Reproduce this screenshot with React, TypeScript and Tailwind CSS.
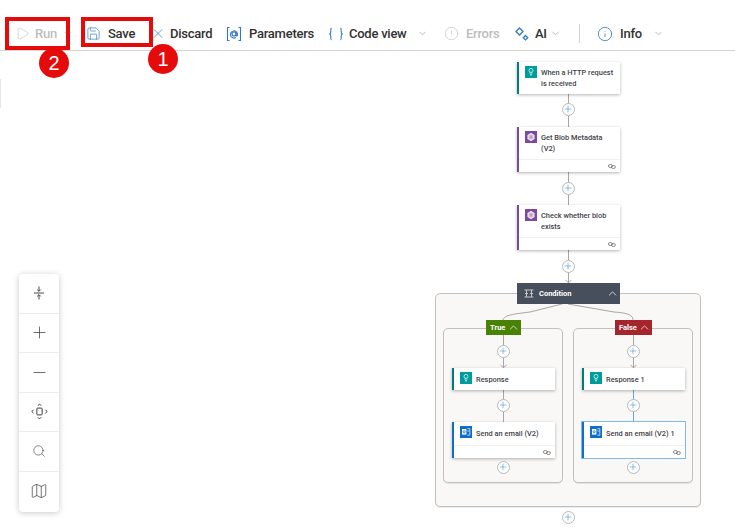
import React from "react";
import { ChevronDown, ChevronUp, X, Info, Play, Save, CircleAlert, Plus, Minus, Search, Map as MapIcon } from "lucide-react";

const font = { fontFamily: 'Roboto,"Noto Sans",sans-serif' };

function Chev({ className = "" }: { className?: string }) {
  return <ChevronDown size={11} strokeWidth={1.2} className={"text-[#8a8886] " + className} />;
}

function ToolButton({ icon, label, muted, after, className = "", gap }: { icon: React.ReactNode; label: string; muted?: boolean; after?: React.ReactNode; className?: string; gap: string }) {
  return (
    <div className={"flex items-center shrink-0 " + className}>
      <span className="flex w-4 h-4 items-center justify-center">{icon}</span>
      <span className={gap + " text-[13px] font-medium tracking-[-0.25px] " + (muted ? "text-[#bdbdbd]" : "text-[#323130]")}>{label}</span>
      {after}
    </div>
  );
}

function HttpIcon({ color = "#009c9c" }: { color?: string }) {
  return (
    <svg width="12" height="12" viewBox="0 0 12 12" className="shrink-0">
      <rect width="12" height="12" fill={color} />
      <circle cx="6" cy="4.4" r="2" fill="none" stroke="#bfe9e9" strokeWidth="0.9" />
      <path d="M4.4 7h3.2M5 8.4h2M5.6 9.6h.8" stroke="#bfe9e9" strokeWidth="0.9" />
    </svg>
  );
}
function BlobIcon() {
  return (
    <svg width="12" height="12" viewBox="0 0 12 12" className="shrink-0">
      <rect width="12" height="12" fill="#7c4a9c" />
      <path d="M6 1.8 9.6 3.9v4.2L6 10.2 2.4 8.1V3.9Z" fill="#e6dcec" />
      <rect x="4.4" y="4.3" width="3.2" height="3.4" fill="#b9a0c9" />
    </svg>
  );
}
function OutlookIcon() {
  return (
    <svg width="12" height="12" viewBox="0 0 12 12" className="shrink-0">
      <rect width="12" height="12" fill="#0f6fc6" />
      <rect x="2" y="3" width="4.4" height="5.6" fill="#fff" />
      <circle cx="4.2" cy="5.8" r="1.1" fill="none" stroke="#0f6fc6" strokeWidth="0.8" />
      <path d="M7.4 2.6h2.4v6.6H7.4M7.4 5h2.4" fill="none" stroke="#cfe4f6" strokeWidth="0.8" />
    </svg>
  );
}

function LinkMark() {
  return (
    <svg width="8" height="5" viewBox="0 0 8 5">
      <ellipse cx="2.4" cy="2" rx="2" ry="1.5" fill="none" stroke="#6f6f6f" strokeWidth="0.8" />
      <ellipse cx="5.4" cy="3" rx="2" ry="1.5" fill="none" stroke="#6f6f6f" strokeWidth="0.8" />
    </svg>
  );
}

function Node({ x, y, w = 103, title, icon, accent, h, footer, selected, single }: { x: number; y: number; w?: number; h: number; title: React.ReactNode; icon: React.ReactNode; accent: string; footer?: boolean; selected?: boolean; single?: boolean }) {
  return (
    <div
      className={"absolute bg-white flex flex-col " + (selected ? "shadow-[0_0_0_1px_#7dbbec]" : "shadow-[0_1px_3px_rgba(0,0,0,0.3)]")}
      style={{ left: x, top: y, width: w, height: h, borderLeft: `2px solid ${accent}` }}
    >
      <div className="flex items-start gap-[4px] pl-[6px] pt-[4px] flex-1 min-h-0">
        {icon}
        <div className={"text-[7.4px] leading-[11px] font-medium text-[#3f3f48] whitespace-nowrap " + (single ? "mt-[2px]" : "mt-[1px]")}>{title}</div>
      </div>
      {footer && (
        <div className="h-[13px] border-t border-[#f0f0f0] flex items-center justify-end pr-[4px]">
          <LinkMark />
        </div>
      )}
    </div>
  );
}

function PlusDot({ x, y }: { x: number; y: number }) {
  return (
    <div
      className="absolute w-[13px] h-[13px] rounded-full bg-white border border-[#b8b8b8] flex items-center justify-center"
      style={{ left: x - 6.5, top: y - 6.5 }}
    >
      <Plus size={10} strokeWidth={1.4} className="text-[#3f92d8]" />
    </div>
  );
}

function VLine({ x, y1, y2, color = "#a6a6a6", arrow }: { x: number; y1: number; y2: number; color?: string; arrow?: boolean }) {
  return (
    <>
      <div className="absolute w-px" style={{ left: x, top: y1, height: y2 - y1, backgroundColor: color }} />
      {arrow && (
        <svg className="absolute" style={{ left: x - 3, top: y2 - 4 }} width="7" height="5" viewBox="0 0 7 5">
          <path d="M.5.8 3.5 3.8 6.5.8" fill="none" stroke={color} strokeWidth="1" />
        </svg>
      )}
    </>
  );
}

function BranchTag({ x, w, label, color }: { x: number; w: number; label: string; color: string }) {
  return (
    <div
      className="absolute h-[15px] top-[320px] flex items-center justify-between pl-[4px] pr-[1px] text-white text-[7.5px] font-bold"
      style={{ left: x, width: w, backgroundColor: color }}
    >
      <span>{label}</span>
      <ChevronUp size={13} strokeWidth={1.3} />
    </div>
  );
}

function Panel({ x }: { x: number }) {
  return (
    <div
      className="absolute top-[328px] w-[120px] h-[155px] rounded-[5px] border border-[#c2c0be] bg-[#f9f8f7] shadow-[0_1px_0_rgba(0,0,0,0.08)]"
      style={{ left: x }}
    />
  );
}

function ZoomControls() {
  const cell = "h-[39.5px] flex items-center justify-center text-[#333] border-b border-[#ececec] last:border-b-0";
  return (
    <div className="absolute left-[19px] top-[274px] w-[40px] h-[238px] bg-white rounded-[4px] shadow-[0_1px_6px_rgba(0,0,0,0.22)] flex flex-col">
      <div className={cell}>
        <svg width="12" height="14" viewBox="0 0 12 14" fill="none" stroke="#333" strokeWidth="0.9">
          <path d="M1 7h10M6 .5v4.6M4.200 3.600 6 5.400l1.800-1.800M6 13.500V8.900M4.200 10.400 6 8.600l1.800 1.800" />
        </svg>
      </div>
      <div className={cell}><Plus size={19} strokeWidth={0.9} /></div>
      <div className={cell}><Minus size={19} strokeWidth={0.9} /></div>
      <div className={cell}>
        <svg width="17" height="17" viewBox="0 0 16 16" fill="none" stroke="#333" strokeWidth="0.9">
          <rect x="5.500" y="4.800" width="5" height="6.400" rx="0.800" />
          <path d="M6.400 2.600 8 1l1.600 1.600M6.400 13.400 8 15l1.600-1.600M2.400 6.400.8 8l1.600 1.600M13.600 6.400 15.200 8l-1.600 1.600" />
        </svg>
      </div>
      <div className={cell}><Search size={14} strokeWidth={1} /></div>
      <div className={cell}><MapIcon size={18} strokeWidth={0.9} /></div>
    </div>
  );
}

function Badge({ x, y, n }: { x: number; y: number; n: string }) {
  return (
    <div
      className="absolute w-[30px] h-[30px] rounded-full bg-[#e60b0b] text-white text-[20px] flex items-center justify-center"
      style={{ left: x - 15, top: y - 15, fontFamily: '"Liberation Sans",sans-serif' }}
    >
      {n}
    </div>
  );
}

export default function App() {
  return (
    <div className="relative w-[735px] h-[528px] bg-white overflow-hidden" style={font}>
      <div className="h-[51px] border-b border-[#d4d4d4] flex items-center pl-[14px] pt-[18px] pb-[1px]">
        <ToolButton gap="ml-[5px]" icon={<Play size={15} strokeWidth={1} className="text-[#bdbdbd]" />} label="Run" muted after={<Chev className="ml-[5px]" />} className="w-[71px]" />
        <ToolButton gap="ml-[7px]" icon={<Save size={15} strokeWidth={1.2} className="text-[#3f86c9]" />} label="Save" className="w-[65px]" />
        <ToolButton gap="ml-[4px]" icon={<X size={17} strokeWidth={1.1} className="text-[#2f79be]" />} label="Discard" className="w-[76px]" />
        <ToolButton
          gap="ml-[7px]"
          icon={
            <svg width="16" height="16" viewBox="0 0 16 16" fill="none" stroke="#2f79be" strokeWidth="1.1">
              <path d="M3.500 1.500H1.500v13h2M12.500 1.500h2v13h-2" />
              <circle cx="8" cy="8" r="2" />
              <path d="M10 6v3.200c0 1 1.600 1 1.600-.6A3.600 3.600 0 1 0 9.800 11.600" />
            </svg>
          }
          label="Parameters"
          className="w-[102px]"
        />
        <ToolButton
          gap="ml-[5px]"
          icon={
            <svg width="16" height="16" viewBox="0 0 16 16" fill="none" stroke="#2f79be" strokeWidth="1.1">
              <path d="M3.500 2C2.500 2.500 2.800 4 2.800 5.500S2.700 7.600 1.800 8c.9.400 1 1 1 2.500S2.500 13.500 3.500 14M12.500 2c1 .5.700 2 .7 3.500S13.300 7.600 14.200 8c-.9.400-1 1-1 2.500s.3 3-.7 3.500" />
            </svg>
          }
          label="Code view"
          after={<Chev className="ml-[10px]" />}
          className="w-[115px]"
        />
        <ToolButton gap="ml-[7px]" icon={<CircleAlert size={15} strokeWidth={1} className="text-[#bdbdbd]" />} label="Errors" muted className="w-[71px]" />
        <ToolButton
          gap="ml-[5px]"
          icon={
            <svg width="16" height="16" viewBox="0 0 16 16" fill="none" stroke="#2f79be" strokeWidth="1.300">
              <path d="M5.500 2 9 5.500 5.500 9 2 5.500ZM11.500 9.500l2.200 2.200-2.200 2.200-2.200-2.200Z" />
            </svg>
          }
          label="AI"
          after={<Chev className="ml-[3px]" />}
          className="w-[65px]"
        />
        <div className="w-px h-[19px] bg-[#d4d4d4] mr-[17px]" />
        <ToolButton gap="ml-[7px]" icon={<Info size={16} strokeWidth={1.2} className="text-[#2f79be]" />} label="Info" after={<Chev className="ml-[11px]" />} />
      </div>

      <div className="absolute left-0 top-[79px] w-[1px] h-[29px] bg-[#e8e8e8]" />

      {/* diagram canvas */}
      <div className="absolute left-[435px] top-[293px] w-[266px] h-[214px] rounded-[5px] border border-[#c2c0be] bg-[#f9f8f7] shadow-[0_1px_0_rgba(0,0,0,0.08)]" />
      <Panel x={443} />
      <Panel x={573} />

      <VLine x={568} y1={93} y2={127} />
      <VLine x={568} y1={172} y2={205} />
      <VLine x={568} y1={250} y2={283} arrow />
      <svg className="absolute left-[500px] top-[303px]" width="140" height="18" viewBox="0 0 140 18" fill="none" stroke="#a6a6a6">
        <path d="M3 17C4 12 14 11 30 9L62 1" />
        <path d="M68 1l46 8c14 1 19 3 19 8" />
      </svg>
      <VLine x={503} y1={335} y2={368} arrow />
      <VLine x={503} y1={390} y2={422} />
      <VLine x={633} y1={335} y2={368} arrow />
      <VLine x={633} y1={390} y2={422} color="#5ea9e4" />

      <Node x={517} y={62} h={32} accent="#007c7c" icon={<HttpIcon />} title={<>When a HTTP request<br />is received</>} />
      <Node x={517} y={127} h={45} accent="#7c4a9c" icon={<BlobIcon />} footer title={<>Get Blob Metadata<br />(V2)</>} />
      <Node x={517} y={205} h={45} accent="#7c4a9c" icon={<BlobIcon />} footer title={<>Check whether blob<br />exists</>} />

      <div className="absolute left-[517px] top-[283px] w-[103px] h-[21px] bg-[#474f5c] flex items-center pl-[7px] pr-[1px] text-white text-[7.5px] font-bold">
        <svg width="10" height="9" viewBox="0 0 10 9" fill="none" stroke="#c7c7c7" strokeWidth="1" className="shrink-0">
          <path d="M.5 1h9M.5 8h9M2.500 1v7M7.500 1v7M1 4.500h3M6 4.500h3" />
        </svg>
        <span className="ml-[5px] flex-1">Condition</span>
        <ChevronUp size={13} strokeWidth={1.3} />
      </div>

      <BranchTag x={486} w={35} label="True" color="#498205" />
      <BranchTag x={615} w={37} label="False" color="#a4262c" />

      <Node x={452} y={368} h={22} single accent="#007c7c" icon={<HttpIcon />} title="Response" />
      <Node x={452} y={422} h={36} single accent="#0f6fc6" icon={<OutlookIcon />} footer title="Send an email (V2)" />
      <Node x={582} y={368} h={22} single accent="#007c7c" icon={<HttpIcon />} title="Response 1" />
      <Node x={582} y={422} h={36} single accent="#0f6fc6" icon={<OutlookIcon />} footer selected title="Send an email (V2) 1" />

      {[[568, 109], [568, 188], [568, 266], [503, 351], [503, 405], [503, 467], [633, 351], [633, 405], [633, 467], [568, 517]].map(([x, y]) => (
        <PlusDot key={`${x}-${y}`} x={x} y={y} />
      ))}

      <ZoomControls />

      {/* annotations */}
      <div className="absolute left-[5px] top-[17px] w-[65px] h-[33px] border-[4px] border-[#e60b0b]" />
      <div className="absolute left-[81px] top-[17px] w-[72px] h-[30px] border-[4px] border-[#e60b0b]" />
      <Badge x={54} y={63} n="2" />
      <Badge x={163} y={59} n="1" />
    </div>
  );
}
